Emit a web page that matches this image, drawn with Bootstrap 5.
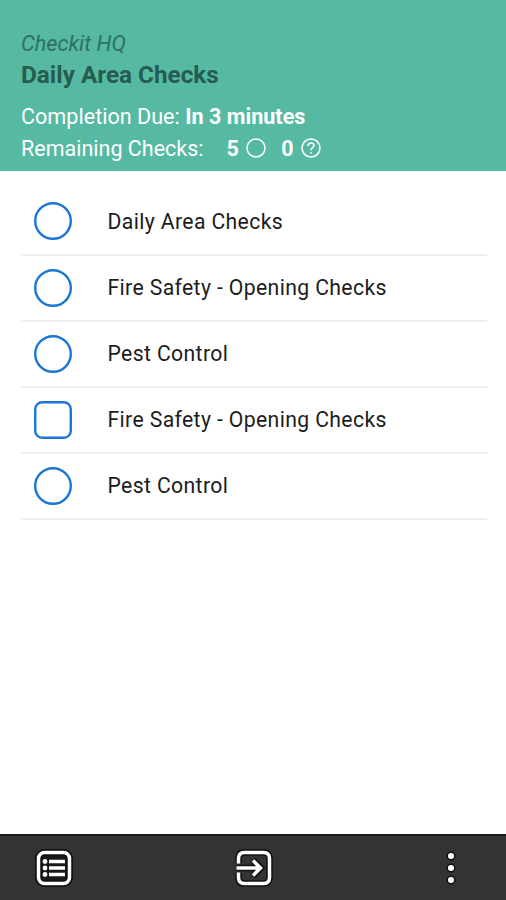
<!DOCTYPE html>
<html lang="en">
<head>
<meta charset="utf-8">
<meta name="viewport" content="width=device-width, initial-scale=1">
<title>Daily Area Checks</title>
<link href="https://cdn.jsdelivr.net/npm/bootstrap@5.3.0/dist/css/bootstrap.min.css" rel="stylesheet">
<style>
body{font-family:Roboto,"Liberation Sans",sans-serif;color:#1c1c1c}
.area-head{background:#56b9a2;height:171.4px;padding:28.6px 21px 0;font-size:21.5px;line-height:32px;white-space:nowrap}
.area-head .site{font-size:21.7px;line-height:30px;color:#2f7061}
.area-head .title{font-size:24.3px;line-height:32px;color:#265c51;margin-bottom:10.4px}
.area-head .due{font-size:21.6px}
.remaining-label{margin-right:23px}
.area-head .count-icon{margin:0 15.5px 2px 7px}
.check-list{padding:18px 19px 0 21px}
.check-row{height:66.2px;border-bottom:2px solid #efefef;padding-left:12px;font-size:21.2px;letter-spacing:.37px}
.check-row svg{margin-right:34.5px}
.tool-bar{background:#333;height:66px;border-top:2px solid #1c1c1c;padding:0 50px 0 35px}
.enter-icon{margin-right:11px}
</style>
</head>
<body class="bg-white">
<div class="d-flex flex-column vh-100 overflow-hidden">
  <header class="area-head text-white flex-shrink-0">
    <div class="site fst-italic"><span>Checkit HQ</span></div>
    <h1 class="title fw-bold"><span>Daily Area Checks</span></h1>
    <div class="due"><span>Completion Due: <b>In 3 minutes</b></span></div>
    <div class="d-flex align-items-center">
      <span class="remaining-label">Remaining Checks:</span><b>5</b>
      <svg class="count-icon" width="20" height="20" fill="none" stroke="#fff" stroke-width="1.5"><circle cx="10" cy="10" r="9"/></svg>
      <b>0</b>
      <svg class="count-icon" width="20" height="20" fill="none" stroke="#fff" stroke-width="1.5"><circle cx="10" cy="10" r="9"/><path d="M7 8c0-4 6-4 6-.5C13 9.500 10 9.500 10 12.300M10 14v1.700"/></svg>
    </div>
  </header>
  <main class="check-list flex-grow-1">
    <div class="check-row d-flex align-items-center"><svg width="40" height="40" fill="none" stroke="#1b76d5" stroke-width="2.400"><circle cx="20" cy="20" r="17.800"/></svg><span>Daily Area Checks</span></div>
    <div class="check-row d-flex align-items-center"><svg width="40" height="40" fill="none" stroke="#1b76d5" stroke-width="2.400"><circle cx="20" cy="20" r="17.800"/></svg><span>Fire Safety - Opening Checks</span></div>
    <div class="check-row d-flex align-items-center"><svg width="40" height="40" fill="none" stroke="#1b76d5" stroke-width="2.400"><circle cx="20" cy="20" r="17.800"/></svg><span>Pest Control</span></div>
    <div class="check-row d-flex align-items-center"><svg width="40" height="40" fill="none" stroke="#1b76d5" stroke-width="2.400"><rect x="2.200" y="2.200" width="35.600" height="35.600" rx="7"/></svg><span>Fire Safety - Opening Checks</span></div>
    <div class="check-row d-flex align-items-center"><svg width="40" height="40" fill="none" stroke="#1b76d5" stroke-width="2.400"><circle cx="20" cy="20" r="17.800"/></svg><span>Pest Control</span></div>
  </main>
  <footer class="tool-bar d-flex align-items-center justify-content-between flex-shrink-0">
    <svg width="38" height="38" fill="none"><rect x="3.500" y="3.500" width="31" height="31" rx="6" stroke="#111" stroke-width="7"/><rect x="7" y="7" width="24" height="24" fill="#181818"/><rect x="3.500" y="3.500" width="31" height="31" rx="6" stroke="#fff" stroke-width="3.500"/><path d="M14 12.500H30M14 19H30M14 25.500H30" stroke="#fff" stroke-width="3.300"/><g fill="#fff"><circle cx="10" cy="12.500" r="2.400"/><circle cx="10" cy="19" r="2.400"/><circle cx="10" cy="25.500" r="2.400"/></g></svg>
    <svg class="enter-icon" width="38" height="38" fill="none"><g stroke="#111" stroke-width="6.500"><path d="M3.500 14V9.500q0-6 6-6h19q6 0 6 6v19q0 6-6 6h-19q-6 0-6-6V24M1.500 19H25M18 11l8 8-8 8"/></g><g stroke="#fff" stroke-width="3.500"><path d="M3.500 14.500V9.500q0-6 6-6h19q6 0 6 6v19q0 6-6 6h-19q-6 0-6-6v-5M1.500 19H25M18 11.500l7.500 7.500-7.500 7.500"/></g></svg>
    <svg width="10" height="36" fill="#fff" stroke="#111" stroke-width="1.500"><circle cx="5" cy="6" r="3.800"/><circle cx="5" cy="18" r="3.800"/><circle cx="5" cy="30" r="3.800"/></svg>
  </footer>
</div>
<script src="https://cdn.jsdelivr.net/npm/bootstrap@5.3.0/dist/js/bootstrap.bundle.min.js"></script>
</body>
</html>
